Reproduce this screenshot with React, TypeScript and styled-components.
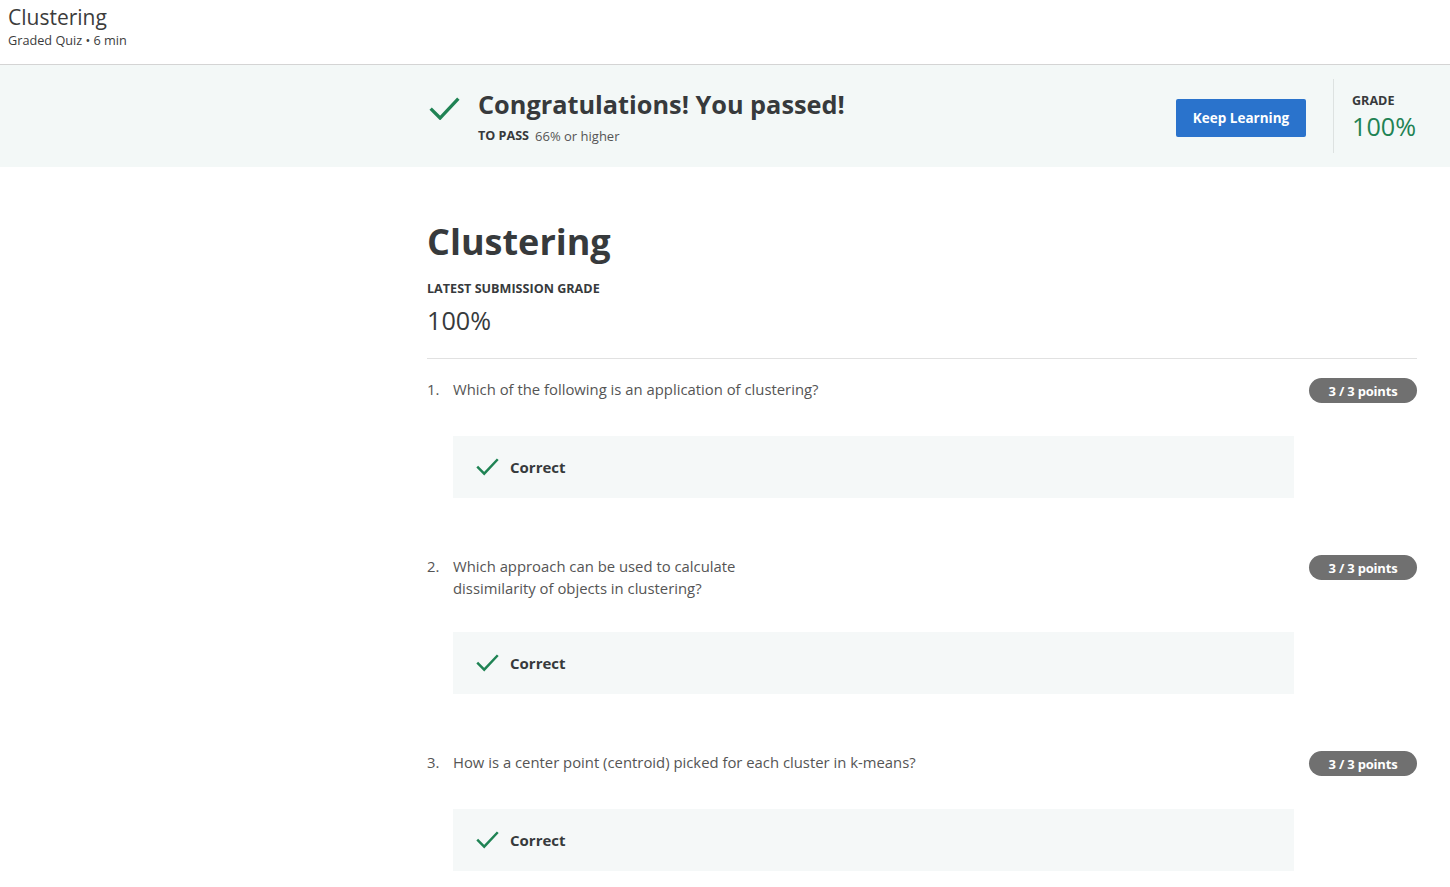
import styled, { createGlobalStyle } from 'styled-components';

const GlobalStyle = createGlobalStyle`
	html, body {
		margin: 0;
		padding: 0;
		background: #fff;
		font-family: 'Open Sans', 'Noto Sans', sans-serif;
		color: #373a3c;
	}
	* {
		box-sizing: border-box;
	}
`;

const Header = styled.header`
	height: 65px;
	padding: 2px 8px 0;
	border-bottom: 1px solid #d4d4d4;
`;

const HeaderTitle = styled.h1`
	margin: 0;
	font-size: 21px;
	font-weight: 400;
	line-height: 30px;
	color: #3c3c3c;
`;

const HeaderMeta = styled.div`
	font-size: 12.7px;
	line-height: 16px;
	color: #3c3c3c;
`;

const Banner = styled.section`
	height: 102px;
	background: #f3f8f7;
	display: flex;
	align-items: center;
	padding-left: 429px;
`;

const BannerMain = styled.div`
	flex: 1;
	display: flex;
	align-items: flex-start;
	gap: 18px;
`;

const BannerIcon = styled.div`
	margin-top: 10px;
`;

const BannerText = styled.div`
	display: flex;
	flex-direction: column;
`;

const BannerHeading = styled.h2`
	margin: 0;
	font-size: 25.3px;
	font-weight: 700;
	line-height: 34px;
	color: #373a3c;
`;

const PassRow = styled.div`
	margin-top: 6px;
	font-size: 13px;
	line-height: 18px;
	color: #555;
	display: flex;
	gap: 6px;
`;

const PassLabel = styled.span`
	font-weight: 700;
	font-size: 12.6px;
	color: #373a3c;
`;

const Button = styled.button`
	height: 38px;
	width: 130px;
	background: #2a73cc;
	color: #fff;
	border: none;
	border-radius: 2px;
	font-family: inherit;
	font-size: 13.5px;
	font-weight: 700;
	margin-right: 27px;
	margin-top: 4px;
`;

const GradeBox = styled.div`
	width: 117px;
	flex-shrink: 0;
	align-self: stretch;
	margin: 14px 0;
	border-left: 1px solid #dde2e1;
	padding: 14px 0 0 18px;
	display: flex;
	flex-direction: column;
`;

const SmallCaps = styled.div`
	font-size: 12.6px;
	font-weight: 700;
	line-height: 16px;
	color: #373a3c;
`;

const GradeValue = styled.div<{ $color?: string }>`
	font-size: 25.2px;
	font-weight: 400;
	line-height: 34px;
	color: ${(p) => p.$color || '#373a3c'};
`;

const Main = styled.main`
	margin-left: 427px;
	width: 990px;
	padding-top: 50px;
`;

const Title = styled.h1`
	margin: 0;
	font-size: 36px;
	font-weight: 700;
	line-height: 50px;
	color: #373a3c;
`;

const Summary = styled.div`
	margin-top: 14px;
	padding-bottom: 21px;
	border-bottom: 1px solid #e1e1e1;
	display: flex;
	flex-direction: column;
	gap: 6px;
`;

const Question = styled.div`
	padding-top: 19px;
	margin-bottom: 38px;
`;

const QuestionRow = styled.div`
	display: flex;
	align-items: flex-start;
	justify-content: space-between;
`;

const Prompt = styled.div`
	display: flex;
	font-size: 14.85px;
	line-height: 22px;
	color: #555;
`;

const Num = styled.span`
	width: 26px;
	flex-shrink: 0;
`;

const PromptText = styled.span`
	white-space: pre-line;
`;

const Badge = styled.span`
	height: 25px;
	width: 108px;
	border-radius: 13px;
	background: #707070;
	color: #fff;
	font-size: 13px;
	font-weight: 700;
	display: flex;
	align-items: center;
	justify-content: center;
	letter-spacing: -0.2px;
`;

const Feedback = styled.div`
	margin: 33px 0 0 26px;
	width: 841px;
	height: 62px;
	background: #f5f8f8;
	display: flex;
	align-items: center;
	gap: 11px;
	padding-left: 23px;
	font-size: 15px;
	font-weight: 700;
	color: #373a3c;
`;

const Check = ({ size }: { size: number }) => (
	<svg width={size} height={size * 0.75} viewBox="0 0 28 21" fill="none">
		<polyline points="1.5,10.5 10,19 26.5,1.5" stroke="#1f8354" strokeWidth="3" />
	</svg>
);

const questions = [
	'Which of the following is an application of clustering?',
	'Which approach can be used to calculate\ndissimilarity of objects in clustering?',
	'How is a center point (centroid) picked for each cluster in k-means?',
];

export default function App() {
	return (
		<>
			<GlobalStyle />
			<Header>
				<HeaderTitle>Clustering</HeaderTitle>
				<HeaderMeta>Graded Quiz • 6 min</HeaderMeta>
			</Header>

			<Banner>
				<BannerMain>
					<BannerIcon>
						<Check size={31} />
					</BannerIcon>
					<BannerText>
						<BannerHeading>Congratulations! You passed!</BannerHeading>
						<PassRow>
							<PassLabel>TO PASS</PassLabel>
							<span>66% or higher</span>
						</PassRow>
					</BannerText>
				</BannerMain>
				<Button>Keep Learning</Button>
				<GradeBox>
					<SmallCaps>GRADE</SmallCaps>
					<GradeValue $color="#1f8354">100%</GradeValue>
				</GradeBox>
			</Banner>

			<Main>
				<Title>Clustering</Title>
				<Summary>
					<SmallCaps>LATEST SUBMISSION GRADE</SmallCaps>
					<GradeValue>100%</GradeValue>
				</Summary>

				{questions.map((q, i) => (
					<Question key={i}>
						<QuestionRow>
							<Prompt>
								<Num>{i + 1}.</Num>
								<PromptText>{q}</PromptText>
							</Prompt>
							<Badge>3 / 3 points</Badge>
						</QuestionRow>
						<Feedback>
							<Check size={23} />
							<span>Correct</span>
						</Feedback>
					</Question>
				))}
			</Main>
		</>
	);
}
